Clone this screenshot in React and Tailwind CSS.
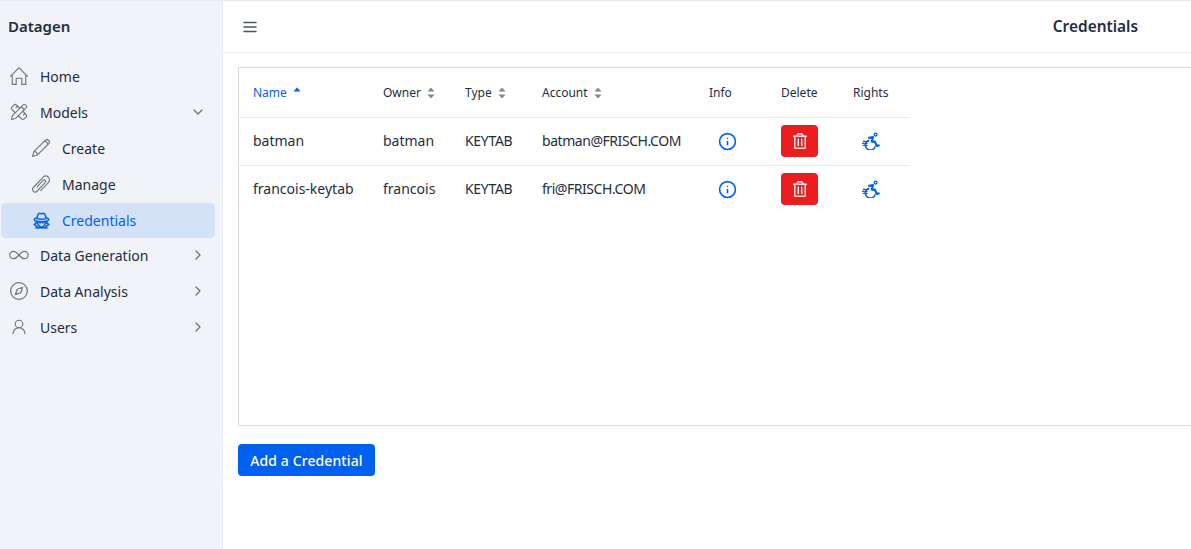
import { HiOutlineMenu } from 'react-icons/hi';
import { PencilRuler, Info, ChevronDown, ChevronRight, UserRound, Infinity as InfinityLine, Compass } from 'lucide-react';
import { FaRegTrashAlt } from 'react-icons/fa';
import { LiaUserSecretSolid } from 'react-icons/lia';
import { SlHome, SlPencil, SlPaperClip } from 'react-icons/sl';

const font = "font-['Noto_Sans',sans-serif]";

const ThinRuler = (props) => <PencilRuler {...props} strokeWidth={1.5} />;
const ThinUser = (props) => <UserRound {...props} strokeWidth={1.5} />;
const ThinCompass = () => <Compass className="w-[20px] h-[20px] -mx-px text-[#6b7685] shrink-0" strokeWidth={1.5} />;
const WideInfinity = () => <InfinityLine className="w-[22px] h-[22px] -mx-[2px] text-[#6b7685] shrink-0" strokeWidth={1.3} />;
const SpyIcon = () => <LiaUserSecretSolid className="w-[21px] h-[21px] -mx-[1.5px] text-[#0060ef] shrink-0" strokeWidth={0.4} stroke="currentColor" />;

const NavItem = ({ icon: Icon, label, chevron }) => (
    <div className="flex items-center h-9 pb-[2px] pl-[10px] pr-[16px] text-[14px] text-[#1f2d3f]">
        <Icon className="w-[18px] h-[18px] text-[#6b7685] shrink-0" />
        <span className="ml-[12px] flex-1">{label}</span>
        {chevron === 'down' && <ChevronDown className="w-[16px] h-[16px] text-[#6b7685]" />}
        {chevron === 'right' && <ChevronRight className="w-[16px] h-[16px] text-[#6b7685]" />}
    </div>
);

const SubItem = ({ icon: Icon, label, active }) => (
    <div className={`flex items-center pl-[31px] ml-px mr-[7px] rounded text-[14px] ${active ? 'h-[35px] bg-[#d3e2f6] text-[#0060ef]' : 'h-9 pb-[2px] text-[#1f2d3f]'}`}>
        <Icon className="w-[18px] h-[18px] shrink-0 text-[#6b7685]" />
        <span className="ml-[12px]">{label}</span>
    </div>
);

const SortIcon = ({ active }) => (
    <svg viewBox="0 0 8 12" className="w-2 h-3 ml-[6px] mb-px">
        <path d="M4 0.5 L7.5 4.5 H0.5 Z" fill={active ? '#0060ef' : '#7c8796'} />
        {!active && <path d="M4 11.5 L7.5 7.5 H0.5 Z" fill="#7c8796" />}
    </svg>
);

// wheelchair with speed lines, no package has this exact one
const RightsIcon = () => (
    <svg viewBox="0 0 18 18" className="w-[18px] h-[18px] text-[#0060ef]" fill="none" stroke="currentColor" strokeLinecap="round" strokeLinejoin="round">
        <circle cx="13.6" cy="2.6" r="1.4" strokeWidth="1.3" />
        <path d="M7 5.8 L11 5 L9.8 9.6 H13 L14.8 14 L16.8 13.4" strokeWidth="2.1" />
        <path d="M6.6 8.4 A5 5 0 1 0 13 15" strokeWidth="1.6" />
        <path d="M1.4 9.4 H6 M0.4 11.4 H5 M1.4 13.4 H5" strokeWidth="1.4" />
    </svg>
);

const rows = [
    { name: 'batman', owner: 'batman', type: 'KEYTAB', account: 'batman@FRISCH.COM' },
    { name: 'francois-keytab', owner: 'francois', type: 'KEYTAB', account: 'fri@FRISCH.COM' },
];

const App = () => {
    return (
        <div className={`${font} h-[549px] w-[1191px] flex overflow-hidden bg-white border-t border-[#e8e9ee]`}>
            <aside className="w-[223px] shrink-0 bg-[#f1f3f8] border-r border-[#e8eaef]">
                <div className="h-[52px] flex items-center pb-px pl-2 text-[15px] font-semibold text-[#1f2d3f]">Datagen</div>
                <nav className="pt-[6px]">
                    <NavItem icon={SlHome} label="Home" />
                    <NavItem icon={ThinRuler} label="Models" chevron="down" />
                    <SubItem icon={SlPencil} label="Create" />
                    <SubItem icon={SlPaperClip} label="Manage" />
                    <SubItem icon={SpyIcon} label="Credentials" active />
                    <NavItem icon={WideInfinity} label="Data Generation" chevron="right" />
                    <NavItem icon={ThinCompass} label="Data Analysis" chevron="right" />
                    <NavItem icon={ThinUser} label="Users" chevron="right" />
                </nav>
            </aside>
            <main className="flex-1 min-w-0 overflow-hidden">
                <header className="h-[52px] flex items-center justify-between border-b border-[#e8eaef] pl-[18px] pr-[53px]">
                    <HiOutlineMenu className="w-[18px] h-[18px] text-[#4b5563]" />
                    <h1 className="pt-px text-[15.4px] font-semibold text-[#1f2d3f]">Credentials</h1>
                </header>
                <div className="pl-[15px] pt-[14px]">
                    <div className="h-[359px] w-[980px] border border-[#d9dae0]">
                        <table className="w-[671px] table-fixed text-[#1f2d3f]">
                            <thead>
                                <tr className="h-[49px] text-[12px] border-b border-[#e8e9ee]">
                                    <th className="w-[144px] pt-[2px] pl-[14px] font-normal text-left text-[#0060ef]"><span className="flex items-center">Name<SortIcon active /></span></th>
                                    <th className="w-[82px] pt-[2px] font-normal text-left"><span className="flex items-center">Owner<SortIcon /></span></th>
                                    <th className="w-[77px] pt-[2px] font-normal text-left"><span className="flex items-center">Type<SortIcon /></span></th>
                                    <th className="w-[153px] pt-[2px] font-normal text-left"><span className="flex items-center">Account<SortIcon /></span></th>
                                    <th className="w-[72px] pt-[2px] pl-[14px] font-normal text-left">Info</th>
                                    <th className="w-[72px] pt-[2px] pl-[14px] font-normal text-left">Delete</th>
                                    <th className="pt-[2px] pl-[14px] font-normal text-left">Rights</th>
                                </tr>
                            </thead>
                            <tbody>
                                {rows.map((row, i) => (
                                    <tr key={row.name} className={`h-[48px] text-[14px] ${i === 0 ? 'border-b border-[#e8e9ee]' : ''}`}>
                                        <td className="pl-[14px] pb-[2px]">{row.name}</td>
                                        <td className="pb-[2px]">{row.owner}</td>
                                        <td className="pb-[2px] tracking-[-0.3px]">{row.type}</td>
                                        <td className="pb-[2px] whitespace-nowrap tracking-[-0.45px]">{row.account}</td>
                                        <td className="pl-[23px]"><Info className="w-[19px] h-[19px] text-[#0060ef]" /></td>
                                        <td className="pl-[14px]">
                                            <div className="w-[37px] h-8 rounded bg-[#ed1c1f] flex items-center justify-center">
                                                <FaRegTrashAlt className="w-[14px] h-4 text-[#fde4e4]" />
                                            </div>
                                        </td>
                                        <td className="pl-[23px]"><RightsIcon /></td>
                                    </tr>
                                ))}
                            </tbody>
                        </table>
                    </div>
                    <button className="mt-[18px] h-8 w-[137px] rounded bg-[#0060ef] text-white text-[14px] font-medium tracking-[0.1px]">Add a Credential</button>
                </div>
            </main>
        </div>
    );
};

export default App;
